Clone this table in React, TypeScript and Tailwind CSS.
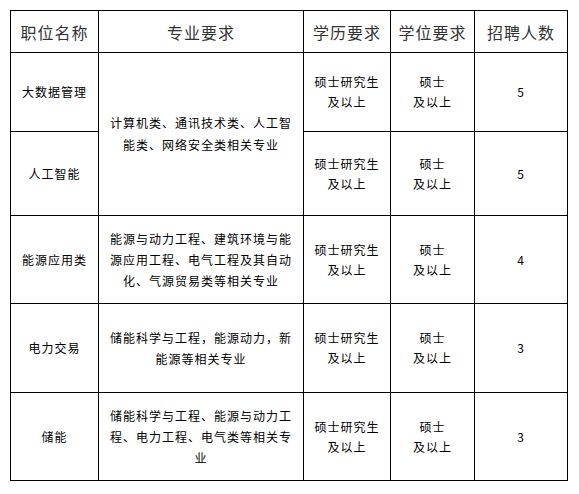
const rows = [
  { name: "大数据管理", major: null as string[] | null, span: 0, count: "5", h: "h-[79px]" },
  { name: "人工智能", major: null, span: 0, count: "5", h: "h-[84px]" },
  {
    name: "能源应用类",
    major: ["能源与动力工程、建筑环境与能", "源应用工程、电气工程及其自动", "化、气源贸易类等相关专业"],
    span: 1,
    count: "4",
    h: "h-[88px]",
  },
  {
    name: "电力交易",
    major: ["储能科学与工程，能源动力，新", "能源等相关专业"],
    span: 1,
    count: "3",
    h: "h-[89px]",
  },
  {
    name: "储能",
    major: ["储能科学与工程、能源与动力工", "程、电力工程、电气类等相关专", "业"],
    span: 1,
    count: "3",
    h: "h-[88px]",
  },
];

const firstMajor = ["计算机类、通讯技术类、人工智", "能类、网络安全类相关专业"];

function Lines({ lines, leading }: { lines: string[]; leading: string }) {
  return (
    <div className={leading}>
      {lines.map((l) => (
        <div key={l} className="whitespace-nowrap">
          {l}
        </div>
      ))}
    </div>
  );
}

export default function App() {
  const cell = "border border-black text-center align-middle p-0";
  const head = `${cell} text-[16px] tracking-[1px] text-[#333] font-normal`;
  const body = `${cell} text-[12px] tracking-[1px] text-black`;

  return (
    <div
      className="bg-white w-[579px] h-[494px] pt-[10px] pl-[10px]"
      style={{ fontFamily: '"Noto Sans CJK SC", "Liberation Sans", sans-serif' }}
    >
      <table className="border-collapse table-fixed w-[557px]">
        <colgroup>
          <col className="w-[88px]" />
          <col className="w-[205px]" />
          <col className="w-[87px]" />
          <col className="w-[84px]" />
          <col className="w-[93px]" />
        </colgroup>
        <thead>
          <tr className="h-[42px]">
            <th className={head}>职位名称</th>
            <th className={head}>专业要求</th>
            <th className={head}>学历要求</th>
            <th className={head}>学位要求</th>
            <th className={head}>招聘人数</th>
          </tr>
        </thead>
        <tbody>
          {rows.map((r, i) => (
            <tr key={r.name} className={r.h}>
              <td className={body}>{r.name}</td>
              {i === 0 && (
                <td rowSpan={2} className={body}>
                  <Lines lines={firstMajor} leading="leading-[22px]" />
                </td>
              )}
              {r.major && (
                <td className={body}>
                  <Lines lines={r.major} leading="leading-[21px]" />
                </td>
              )}
              <td className={body}>
                <Lines lines={["硕士研究生", "及以上"]} leading="leading-[20px]" />
              </td>
              <td className={body}>
                <Lines lines={["硕士", "及以上"]} leading="leading-[20px]" />
              </td>
              <td className={body}>{r.count}</td>
            </tr>
          ))}
        </tbody>
      </table>
    </div>
  );
}
